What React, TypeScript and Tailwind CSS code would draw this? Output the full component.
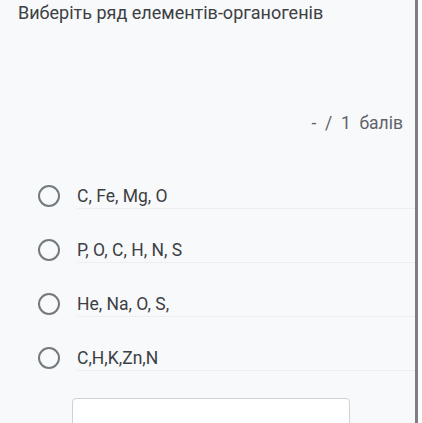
export default function App() {
  const options = ["C, Fe, Mg, O", "P, O, C, H, N, S", "He, Na, O, S,", "C,H,K,Zn,N"];
  return (
    <div
      className="relative w-[422px] h-[423px] overflow-hidden bg-[#f8f9fb] text-[#3c4043]"
      style={{ fontFamily: "Roboto, 'Noto Sans', sans-serif" }}
    >
      <div className="pl-[18px] pt-[1px] text-[18px] leading-[24px]">Виберіть ряд елементів-органогенів</div>
      <div className="mt-[86px] pr-[19px] flex justify-end text-[17.5px] leading-[24px] text-[#5f6368]">
        <span className="whitespace-pre">-  /  1  балів</span>
      </div>
      <div className="mt-[48px] flex flex-col">
        {options.map((o) => (
          <div key={o} className="flex items-start mb-[28px]">
            <div className="ml-[38px] mt-[2px] w-[22px] h-[22px] rounded-full border-[2.5px] border-[#717b80] shrink-0" />
            <div className="ml-[17px] flex-1 h-[26px] border-b border-[#eceef1] text-[17.5px] leading-[26px]">{o}</div>
          </div>
        ))}
      </div>
      <div className="-mt-[1px] ml-[72px] w-[278px] h-[50px] bg-white border border-[#cfd1d4] rounded-[4px] flex justify-center pt-[20px] text-[17px] text-[#5f6368]">
        Відповісти
      </div>
      <div className="absolute top-0 right-[4px] w-[3px] h-full bg-[#7d7f80]" />
      <div className="absolute top-0 right-0 w-[4px] h-full bg-[#fbfcfd]" />
    </div>
  );
}
